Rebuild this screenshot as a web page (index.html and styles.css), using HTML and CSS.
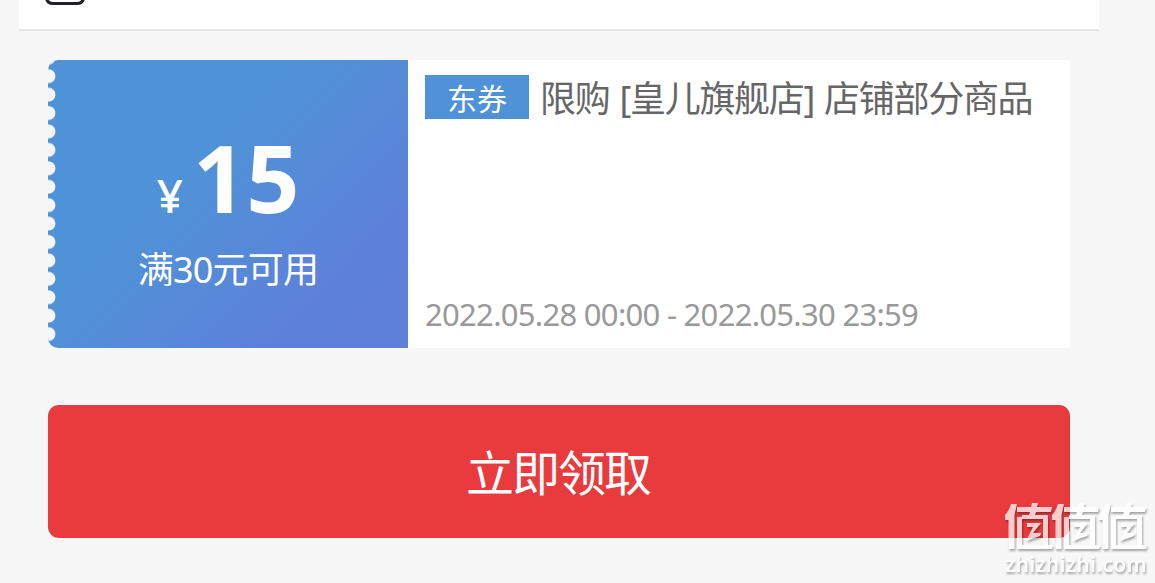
FILE: index.html
```
<!DOCTYPE html>
<html lang="zh-CN">
<head>
    <meta charset="UTF-8">
    <meta name="viewport" content="width=device-width, initial-scale=1.0">
    <title>领取优惠券</title>
    <link rel="stylesheet" href="styles.css">
</head>
<body>
    <div class="container">
        <div class="header">
            <svg class="header-icon" width="40" height="6" viewBox="0 0 40 6">
                <path d="M1.5 -20V-3Q1.5 3.5 8 3.5H32Q38.5 3.5 38.5 -3V-20" fill="none" stroke="#222226" stroke-width="3"/>
            </svg>
        </div>

        <!-- Coupon -->
        <div class="coupon">
            <div class="coupon-left">
                <div class="price"><span class="yen">¥</span><span class="amount">15</span></div>
                <div class="limit">满30元可用</div>
            </div>
            <div class="coupon-right">
                <div class="coupon-title">
                    <span class="tag">东券</span>
                    <span class="title-text">限购 [皇儿旗舰店] 店铺部分商品</span>
                </div>
                <div class="date">2022.05.28 00:00 - 2022.05.30 23:59</div>
            </div>
        </div>

        <button class="get-btn">立即领取</button>
    </div>

    <!-- Watermark -->
    <div class="watermark">
        <svg width="144" height="48" viewBox="0 0 144 48">
            <defs>
                <g id="zhi">
                    <path d="M6 1H12L9.500 12V46H3.500V17L0 17V12Q4 8 6 1Z"/>
                    <path d="M12 4H26L27 0H33L32 4H47L46 9H31L30 12H43V42H48L47 46H12V14H17V42H38V16H17V12H24L25 9H12Z"/>
                    <path d="M22 20H36L28 30H36L35 33L21 38L28 24H22Z"/>
                </g>
            </defs>
            <use href="#zhi" x="0"/>
            <use href="#zhi" x="47"/>
            <use href="#zhi" x="94"/>
        </svg>
        <div class="watermark-text">zhizhizhi.com</div>
    </div>
</body>
</html>
```
FILE: styles.css
```
* {
    box-sizing: border-box;
}

body {
    margin: 0;
    height: 583px;
    overflow: hidden;
    background-color: #f7f7f7;
    font-family: "Noto Sans", "Noto Sans CJK SC", sans-serif;
}

.container {
    width: 1080px;
    margin-left: 19px;
}

.header {
    height: 31px;
    padding-left: 26px;
    background-color: #fff;
    border-bottom: 2px solid #e4e5e4;
}

.header-icon {
    display: block;
}

.coupon {
    display: flex;
    width: 1022px;
    height: 288px;
    margin: 29px 0 0 29px;
    background-color: #fff;
    border-radius: 10px 3px 3px 10px;
    overflow: hidden;
}

.coupon-left {
    width: 360px;
    padding-top: 57px;
    color: #fff;
    text-align: center;
    background: radial-gradient(circle at 0.5px 9.2px, #f3f6fa 6.5px, transparent 7.3px) 0 7px / 9px 18.43px repeat-y,
        linear-gradient(135deg, #4f92d7 0%, #5092d7 40%, #5d81da 78%, #5e7fda 100%);
}

.price {
    display: flex;
    justify-content: center;
    align-items: baseline;
    height: 120px;
    line-height: 120px;
}

.yen {
    font-size: 46px;
    font-weight: 500;
    margin-right: 10px;
}

.amount {
    font-size: 93px;
    font-weight: bold;
}

.limit {
    height: 66px;
    line-height: 66px;
    font-size: 36px;
    letter-spacing: -0.8px;
}

.coupon-right {
    flex: 1;
    display: flex;
    flex-direction: column;
    justify-content: space-between;
    padding: 15px 0 10px 17px;
}

.coupon-title {
    display: flex;
    height: 44px;
    line-height: 48px;
    white-space: nowrap;
}

.tag {
    width: 104px;
    margin-right: 11px;
    background-color: #5092d7;
    color: #fff;
    font-size: 30px;
    text-align: center;
}

.title-text {
    color: #666;
    font-size: 36px;
    letter-spacing: -1.3px;
    word-spacing: 2px;
}

.date {
    height: 48px;
    line-height: 48px;
    color: #999;
    font-size: 31px;
    letter-spacing: -0.7px;
    white-space: nowrap;
}

.get-btn {
    display: block;
    width: 1022px;
    height: 133px;
    margin: 57px 0 0 29px;
    padding: 0 2px 3px 0;
    border: none;
    border-radius: 11px;
    background-color: #e93a3e;
    color: #fff;
    font-family: inherit;
    font-size: 48px;
    letter-spacing: -2px;
    cursor: pointer;
}

/* lies over the page corner */
.watermark {
    position: absolute;
    left: 1005px;
    top: 503px;
    width: 144px;
    opacity: 0.75;
    filter: drop-shadow(1px 2px 1px rgba(0, 0, 0, 0.45));
}

.watermark svg {
    display: block;
    fill: #fff;
}

.watermark-text {
    height: 26px;
    line-height: 26px;
    color: #fff;
    font-family: "Noto Sans", sans-serif;
    font-size: 21px;
    font-weight: 600;
    letter-spacing: 0.3px;
}
```
